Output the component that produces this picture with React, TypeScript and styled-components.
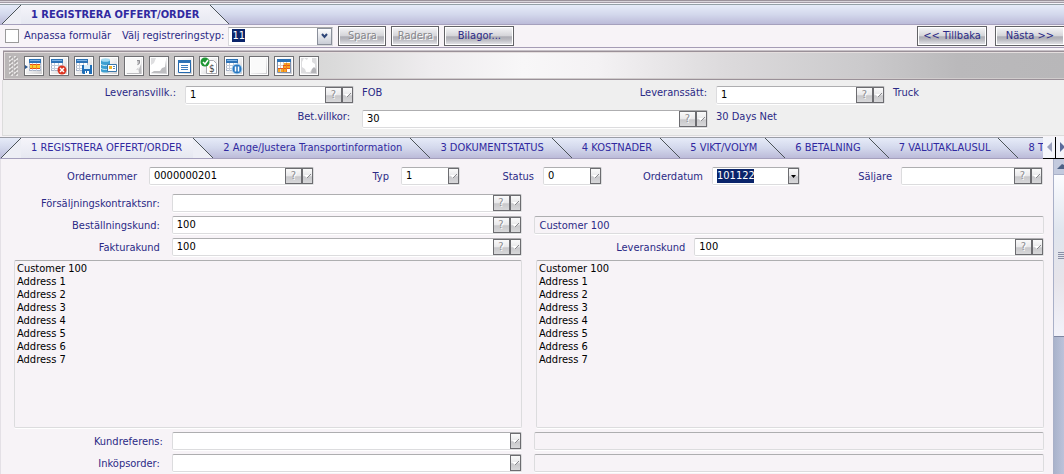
import React from "react";
import styled, { createGlobalStyle, css } from "styled-components";

const font = '"DejaVu Sans Condensed", "DejaVu Sans", sans-serif';
const ink = "#2b2a86";

const Global = createGlobalStyle`
  * { box-sizing: border-box; }
  body { margin: 0; background: #f7f3f7; font: 11px/14px ${font}; color: ${ink}; overflow: hidden; }
  button, input, select, textarea { font: inherit; color: inherit; margin: 0; border-radius: 0; }
`;

const Page = styled.div`
  display: flex;
  flex-direction: column;
  min-height: 100vh;
`;

const TopEdge = styled.div`
  height: 5px;
  background: linear-gradient(#9a929a 0 1px, #d8d4da 1px 2px, #a39ca6 2px 3px, #f4f4fa 3px 4px, #94a0a6 4px 5px);
`;

const Strip = styled.nav`
  display: flex;
  height: 20px;
  padding-left: 1px;
  background: linear-gradient(#e6ebf8, #d3d8ec 50%, #bcbbd9);
  border-bottom: 1px solid #a5a0bd;
  overflow: hidden;
`;

const LowerStrip = styled(Strip)`
  flex: 1;
  min-width: 0;
  height: 22px;
  border-top: 1px solid #9a9da6;
`;

const TabButton = styled.button<{ $bold?: boolean }>`
  display: flex;
  flex: none;
  padding: 0;
  border: 0;
  background: none;
  white-space: nowrap;
  color: #3029a0;
  font-weight: ${(p) => (p.$bold ? 700 : 400)};
  svg { display: block; flex: none; }
`;

const TabText = styled.span<{ $active?: boolean }>`
  align-self: stretch;
  padding: 0 ${(p) => (p.$active ? 11 : 8)}px 0 10px;
  line-height: 20px;
  background: ${(p) => (p.$active ? "linear-gradient(#f5f4fa, #e6e8f1)" : "none")};
`;

const Commands = styled.div`
  display: flex;
  align-items: center;
  height: 23px;
  padding-left: 5px;
  border-bottom: 1px solid #a59cb5;
`;

const CheckLabel = styled.label`
  display: flex;
  align-items: center;
  gap: 5px;
  width: 117px;
  white-space: nowrap;
`;

const Check = styled.input`
  appearance: none;
  width: 14px;
  height: 14px;
  background: #fff;
  border: 1px solid #9a9a9a;
`;

const Combo = styled.div`
  position: relative;
  width: 105px;
  margin: 0 5px 0 4px;
`;

const highlight = css`
  color: #fff;
  background: #fff linear-gradient(#0a246a, #0a246a) no-repeat;
`;

const ComboSelect = styled.select`
  display: block;
  appearance: none;
  width: 100%;
  height: 19px;
  padding: 0 3px;
  border: 1px solid #d8d8dc;
  border-top-color: #a8a8a8;
  ${highlight}
  background-size: 13px 13px;
  background-position: 3px 1px;
  option { color: #000; }
`;

const ComboArrow = styled.span`
  position: absolute;
  right: 1px;
  top: 1px;
  display: grid;
  place-items: center;
  width: 15px;
  height: 17px;
  border: 1px solid #8a8f9a;
  background: linear-gradient(#fdfdfe, #c9cdd6);
  pointer-events: none;
`;

const Push = styled.button<{ $push?: boolean; $wide?: boolean }>`
  height: 20px;
  width: ${(p) => (p.$wide ? 70 : 48)}px;
  flex: none;
  padding: 0;
  margin-right: 5px;
  margin-left: ${(p) => (p.$push ? "auto" : "0")};
  border: 1px solid #626266;
  box-shadow: inset 0 0 0 1px #fff;
  background: linear-gradient(#f6f6f8, #d4d4d8 50%, #acacb4 54%, #bcbcc2 72%, #e8e8ec);
  white-space: nowrap;
  line-height: 16px;
  &:disabled { color: #88888c; text-shadow: 1px 1px 0 #fff; }
`;

const Next = styled(Push)`
  margin: 0 -1px 0 3px;
`;

const Tools = styled.div`
  display: flex;
  align-items: center;
  gap: 5px;
  height: 29px;
  margin: 3px 0 0 3px;
  padding-left: 5px;
  border: solid #9a9098;
  border-width: 1px 0 1px 1px;
  box-shadow: 0 -1px 0 #c6c0c6, inset 1px 1px 0 #e4dede, inset 0 -1px 0 #d0cccc;
  background: linear-gradient(90deg, #bab6b7, #c6c3c3 15%, #dadada 31%, #eeecee 40%, #f8f7f8 49%, #f4f2f4 56%, #dcdadc 68%, #cbcacc 81%, #bab9bb 90%, #b8b7b9);
`;

const ToolButton = styled.button`
  width: 20px;
  height: 20px;
  flex: none;
  padding: 0;
  border: 1px solid #6f6f72;
  background: linear-gradient(135deg, #fff, #f2f2f3 45%, #c9c9cc);
  box-shadow: inset 0 0 0 1px #fff;
  svg { display: block; }
`;

const Header = styled.section`
  display: flex;
  flex-direction: column;
  gap: 6px;
  height: 56px;
  margin-left: 2px;
  padding-top: 6px;
  background: #efefef;
  border-left: 1px solid #dcdcdc;
  border-bottom: 1px solid #dcdcdc;
`;

const HeadRow = styled.div<{ $cols: string }>`
  display: grid;
  grid-template-columns: ${(p) => p.$cols};
  height: 18px;
  align-items: start;
`;

const HeadPair = styled.div`
  display: flex;
  justify-content: space-between;
`;

const Label = styled.label<{ $gap?: number }>`
  text-align: right;
  padding-right: ${(p) => p.$gap ?? 12}px;
  white-space: nowrap;
`;

const Row = styled(HeadRow)`
  align-items: center;
  > ${Label} { padding-top: 2px; }
`;

const Note = styled.span`
  padding-left: 8px;
  white-space: nowrap;
`;

const sunken = css`
  border: 1px solid #dcdcde;
  border-top-color: #aeaeb0;
  border-radius: 2px;
  box-shadow: 0 1px 0 #fff;
`;

const Box = styled.div`
  display: flex;
  align-items: stretch;
  height: 18px;
  min-width: 0;
  background: #fff;
  ${sunken}
`;

const Text = styled.input`
  flex: 1;
  width: 0;
  min-width: 0;
  padding: 0 4px;
  border: 0;
  background: none;
  color: #000;
  outline: 0;
`;

const DateText = styled(Text)`
  ${highlight}
  background-size: 37px 14px;
  background-position: 4px 1px;
`;

const Small = styled.button<{ $wide?: boolean }>`
  display: grid;
  place-items: center;
  width: ${(p) => (p.$wide ? 17 : 11)}px;
  flex: none;
  padding: 0;
  border: 1px solid #6c6c70;
  background: linear-gradient(#fafafa, #e8e8ea 50%, #c8c8cb 55%, #d8d8da);
  color: #8c8c90;
  text-shadow: 1px 1px 0 #fff;
  line-height: 14px;
  svg { display: block; }
`;

const ReadOnly = styled.input`
  width: 100%;
  min-width: 0;
  height: 18px;
  padding: 0 4px;
  background: none;
  ${sunken}
`;

const Address = styled.textarea`
  display: block;
  width: 100%;
  height: 168px;
  padding: 1px 2px;
  resize: none;
  overflow: hidden;
  background: none;
  color: #000;
  line-height: 13px;
  ${sunken}
`;

const Addresses = styled.div`
  display: grid;
  grid-template-columns: 508fr 508fr;
  gap: 14px;
  padding: 0 9px 0 13px;
`;

const Body = styled.div`
  display: flex;
  flex: 1;
`;

const Form = styled.form`
  display: flex;
  flex-direction: column;
  gap: 4px;
  flex: 1;
  min-width: 0;
  padding-top: 8px;
  border-left: 1px solid #e4e0e6;
`;

const FirstRow = styled(Row)`
  margin-bottom: 5px;
`;

const Scroll = styled.div`
  display: flex;
  flex-direction: column;
  width: 11px;
  border-left: 1px solid #a9b0c8;
  background: linear-gradient(90deg, #a9b3cb, #bcc2da);
`;

const ScrollUp = styled.button`
  height: 16px;
  padding: 0;
  border: 0;
  border-bottom: 1px solid #a9b0c8;
  background: #c3cade;
  svg { display: block; }
`;

const Thumb = styled.div`
  display: grid;
  place-items: center end;
  height: 162px;
  border-bottom: 1px solid #7e86a2;
  background: linear-gradient(#fbfcff, #dfe5ee 35%, #e6e4ea 65%, #f2f2fa);
`;

const StripRow = styled.div`
  display: flex;
  margin-top: 1px;
`;

const TabPager = styled.div`
  display: flex;
  flex: none;
  width: 21px;
  border-bottom: 1px solid #000;
  background: #fff;
`;

const PagerButton = styled.button`
  width: 12px;
  padding: 0;
  border: 0;
  background: #f4f5fa;
  & + & { width: 9px; border-left: 1px solid #000; }
  svg { display: block; }
`;

function Slant({ active, left }: { active?: boolean; left?: boolean }) {
  return (
    <svg width="20" height="20" viewBox="0 0 20 20" aria-hidden="true">
      {active && <path d={left ? "M0 20 20 0V20Z" : "M0 0 20 20H0Z"} fill="#edeef5" />}
      <path d={left ? "M0 20 20 0" : "M0 0 20 20"} stroke="#4b5357" fill="none" />
    </svg>
  );
}

function Tab({ text, active, bold }: { text: string; active?: boolean; bold?: boolean }) {
  return (
    <TabButton type="button" $bold={bold}>
      {active && <Slant active left />}
      <TabText $active={active}>{text}</TabText>
      <Slant active={active} />
    </TabButton>
  );
}

const Chevron = () => (
  <svg width="9" height="10" viewBox="0 0 9 10" aria-hidden="true">
    <path d="M1 4h5L4 7z" fill="#fff" />
    <path d="M4 7 8 3" stroke="#8a8a8e" fill="none" />
  </svg>
);

function Field({ id, name, value = "", lookup }: { id: string; name: string; value?: string; lookup?: boolean }) {
  return (
    <Box>
      <Text id={id} defaultValue={value} />
      {lookup && <Small type="button" $wide aria-label={`Sök ${name}`}>?</Small>}
      <Small type="button" aria-label={`Meny ${name}`}><Chevron /></Small>
    </Box>
  );
}

const Table = ({ x = 2 }: { x?: number }) => (
  <g>
    <rect x={x + 0.5} y="2.5" width="11" height="11" fill="#fff" stroke="#a9b4c8" />
    <path d={`M${x} 8.500h12M${x} 11.500h12M${x + 3}.5 6v8M${x + 7}.5 6v8`} stroke="#c3ccda" />
    <rect x={x} y="2" width="12" height="4" fill="#2c72b6" />
    <path d={`M${x + 1} 3.500h10`} stroke="#7fb4e6" />
  </g>
);

const icons: [string, React.ReactNode][] = [
  ["Visa rad", <><Table x={4} /><path d="M5 7h10v5H5z" fill="#fbd02c" /><path d="M5 7.500h10M5 11.500h10" stroke="#e24a1c" /><path d="M7.500 7v5M11.500 7v5" stroke="#ef8a22" /><path d="M0 8l3 2-3 2z" fill="#26558e" /></>],
  ["Ta bort", <><Table x={1} /><circle cx="12" cy="13" r="4.500" fill="#dc3420" /><path d="M10 11l4 4M14 11l-4 4" stroke="#fff" strokeWidth="1.500" /></>],
  ["Spara tabell", <><Table x={1} /><path d="M7 8h10v9H8l-1-1z" fill="#1f6eb8" /><path d="M9 8h6v4H9z" fill="#d8ecfa" /><path d="M10 14h4v3h-4z" fill="#fff" /><path d="M11 14h1v2h-1z" fill="#1f6eb8" /></>],
  ["Databas", <><path d="M1 3v11c0 2 9 2 9 0V3z" fill="#3da0d2" /><ellipse cx="5.500" cy="3" rx="4.500" ry="1.800" fill="#a6dcf2" /><path d="M1 7c1 2 8 2 9 0M1 11c1 2 8 2 9 0" stroke="#c9edfa" fill="none" /><path d="M7.500 7.500h9v7h-9z" fill="#fff" stroke="#3a76a8" /><path d="M9 9h3v3H9z" fill="#f2b52c" /><path d="M13 9.500h2M13 11.500h2" stroke="#5a86b4" /></>],
  ["Dokument", <><path d="M1 1h15v15H1z" fill="#f8f8f8" /><path d="M12 3h3v3l-2 2v3l-2 2 3-1 2-5v10H2v-1h12" fill="#bcbcbf" /><path d="M12 3.500h2.500V6l-2 2" stroke="#8e8e92" fill="none" /></>],
  ["Bild", <><path d="M1 1h15v15H1z" fill="#fff" /><path d="M1 8l3-2 2-5H1z" fill="#dedee0" /><path d="M1 16l3-2h6l2-3 3-1 1-7v13z" fill="#bdbdc0" /></>],
  ["Lista", <><path d="M3.500 3.500h12v12h-12z" fill="#fff" stroke="#2368ae" /><path d="M3 3h13v3H3z" fill="#2c72b6" /><path d="M6 8.500h7M6 10.500h7M6 12.500h7" stroke="#3d7dbe" /></>],
  ["Godkänn pris", <><path d="M6.500 3.500h7l3 3v10h-10z" fill="#fff" stroke="#aaaab0" /><text x="9" y="15" fontSize="10" fill="#444">$</text><circle cx="5" cy="5" r="4.500" fill="#1e9634" /><path d="M3 5l2 2 3-4" stroke="#fff" strokeWidth="1.500" fill="none" /></>],
  ["Pausa", <><Table x={1} /><circle cx="12" cy="12" r="5" fill="#2877c0" stroke="#b4d8f4" /><path d="M10.500 9.500v5M13.500 9.500v5" stroke="#fff" strokeWidth="1.500" /></>],
  ["Tom", <path d="M1 1h15v15H1z" fill="#fafafa" />],
  ["Kalender", <><path d="M2.500 2.500h13v13h-13z" fill="#fff" stroke="#7f91ae" /><path d="M8 6h7v6h-3v3H3v-4h5z" fill="#f9a824" /><path d="M3 8.500h12M3 11.500h12M5.500 5v10M8.500 5v10M11.500 5v10" stroke="#d8cfc4" /><path d="M8 8.500h7M3 11.500h12" stroke="#e0561f" /><path d="M11.500 6v9M8.500 9v6" stroke="#ea7c20" /><path d="M2 2h14v3H2z" fill="#2c72b6" /></>],
  ["Koppling", <><path d="M1 1h15v15H1z" fill="#dcdcde" /><path d="M4 1l3 2 1-2h4v4l3 2v4l-3 1-2 3H6l-1-3-3-2V5z" fill="#fff" /><path d="M12 12l2-2 2 2v4h-5z" fill="#b4b4b8" /></>],
];

const address = ["Customer 100", "Address 1", "Address 2", "Address 3", "Address 4", "Address 5", "Address 6", "Address 7"].join("\n");

const tabs = [
  "2 Ange/Justera Transportinformation",
  "3 DOKUMENTSTATUS",
  "4 KOSTNADER",
  "5 VIKT/VOLYM",
  "6 BETALNING",
  "7 VALUTAKLAUSUL",
  "8 T",
];

const pairCols = "171fr 350fr 13fr 510fr 9fr";

export default function App() {
  return (
    <Page>
      <Global />
      <TopEdge />
      <Strip aria-label="Formulär"><Tab text="1 REGISTRERA OFFERT/ORDER" active bold /></Strip>
      <Commands>
        <CheckLabel><Check type="checkbox" />Anpassa formulär</CheckLabel>
        <label htmlFor="regtype">Välj registreringstyp:</label>
        <Combo>
          <ComboSelect id="regtype" defaultValue="11"><option>11</option></ComboSelect>
          <ComboArrow aria-hidden="true">
            <svg width="7" height="6" viewBox="0 0 7 6"><path d="M1 1 3.500 4 6 1" stroke="#2f4678" strokeWidth="2" fill="none" /></svg>
          </ComboArrow>
        </Combo>
        <Push type="button" disabled>Spara</Push>
        <Push type="button" disabled>Radera</Push>
        <Push type="button" $wide>Bilagor...</Push>
        <Push type="button" $wide $push>&lt;&lt; Tillbaka</Push>
        <Next type="button" $wide>Nästa &gt;&gt;</Next>
      </Commands>
      <Tools role="toolbar" aria-label="Verktyg">
        <svg width="10" height="20" viewBox="0 0 10 20" aria-hidden="true">
          {[1, 5, 9, 13, 17].map((y) => (
            <path key={y} d={`M0 ${y}h2M5 ${y}h2M2 ${y + 2}h2M7 ${y + 2}h2`} stroke="#e6e4e4" strokeWidth="2" />
          ))}
          {[2, 6, 10, 14, 18].map((y) => (
            <path key={y} d={`M1 ${y}h2M6 ${y}h2`} stroke="#8f8c8c" />
          ))}
        </svg>
        {icons.map(([name, art]) => (
          <ToolButton key={name} type="button" aria-label={name}>
            <svg width="18" height="18" viewBox="0 0 18 18" aria-hidden="true">{art}</svg>
          </ToolButton>
        ))}
      </Tools>
      <Header>
        <HeadRow $cols="182fr 169fr 362fr 169fr 179fr">
          <Label $gap={9} htmlFor="villk">Leveransvillk.:</Label>
          <Field id="villk" name="leveransvillkor" value="1" lookup />
          <HeadPair><Note>FOB</Note><Label $gap={9} htmlFor="satt">Leveranssätt:</Label></HeadPair>
          <Field id="satt" name="leveranssätt" value="1" lookup />
          <Note>Truck</Note>
        </HeadRow>
        <HeadRow $cols="359fr 346fr 356fr">
          <Label htmlFor="bet">Bet.villkor:</Label>
          <Field id="bet" name="betalningsvillkor" value="30" lookup />
          <Note>30 Days Net</Note>
        </HeadRow>
      </Header>
      <StripRow>
        <LowerStrip aria-label="Delar">
          <Tab text="1 REGISTRERA OFFERT/ORDER" active />
          {tabs.map((t) => <Tab key={t} text={t} />)}
        </LowerStrip>
        <TabPager>
          <PagerButton type="button" aria-label="Föregående flik">
            <svg width="12" height="21" viewBox="0 0 12 21"><path d="M9 5v10L4 10z" fill="#9aa0bc" /></svg>
          </PagerButton>
          <PagerButton type="button" aria-label="Nästa flik">
            <svg width="8" height="21" viewBox="0 0 8 21"><path d="M4 5v10l5-5z" fill="#5b6c9c" /></svg>
          </PagerButton>
        </TabPager>
      </StripRow>
      <Body>
        <Form>
          <FirstRow $cols="148fr 165fr 87fr 59fr 83fr 59fr 110fr 88fr 101fr 142fr 10fr">
            <Label htmlFor="ordnr">Ordernummer</Label>
            <Field id="ordnr" name="ordernummer" value="0000000201" lookup />
            <Label htmlFor="typ">Typ</Label>
            <Field id="typ" name="typ" value="1" />
            <Label $gap={9} htmlFor="status">Status</Label>
            <Field id="status" name="status" value="0" />
            <Label $gap={9} htmlFor="datum">Orderdatum</Label>
            <Box>
              <DateText id="datum" defaultValue="101122" />
              <Small type="button" aria-label="Välj datum">
                <svg width="5" height="3" viewBox="0 0 5 3"><path d="M0 0h5L2.500 3z" fill="#000" /></svg>
              </Small>
            </Box>
            <Label $gap={9} htmlFor="saljare">Säljare</Label>
            <Field id="saljare" name="säljare" lookup />
          </FirstRow>
          <Row $cols={pairCols}>
            <Label htmlFor="kontrakt">Försäljningskontraktsnr:</Label>
            <Field id="kontrakt" name="kontraktsnummer" lookup />
          </Row>
          <Row $cols={pairCols}>
            <Label htmlFor="kund">Beställningskund:</Label>
            <Field id="kund" name="beställningskund" value="100" lookup />
            <span />
            <ReadOnly readOnly aria-label="Kundnamn" value="Customer 100" />
          </Row>
          <Row $cols="171fr 350fr 173fr 350fr 9fr">
            <Label htmlFor="faktura">Fakturakund</Label>
            <Field id="faktura" name="fakturakund" value="100" lookup />
            <Label $gap={9} htmlFor="leverans">Leveranskund</Label>
            <Field id="leverans" name="leveranskund" value="100" lookup />
          </Row>
          <Addresses>
            <Address readOnly aria-label="Fakturaadress" value={address} />
            <Address readOnly aria-label="Leveransadress" value={address} />
          </Addresses>
          <Row $cols={pairCols}>
            <Label $gap={9} htmlFor="ref">Kundreferens:</Label>
            <Field id="ref" name="kundreferens" />
            <span />
            <ReadOnly readOnly aria-label="Kundreferens text" />
          </Row>
          <Row $cols={pairCols}>
            <Label htmlFor="inkop">Inköpsorder:</Label>
            <Field id="inkop" name="inköpsorder" />
            <span />
            <ReadOnly readOnly aria-label="Inköpsorder text" />
          </Row>
        </Form>
        <Scroll>
          <ScrollUp type="button" aria-label="Rulla upp">
            <svg width="10" height="15" viewBox="0 0 10 15"><path d="M3 10h7V6L8 5z" fill="#4d6185" /></svg>
          </ScrollUp>
          <Thumb>
            <svg width="6" height="8" viewBox="0 0 6 8" aria-hidden="true"><path d="M0 .5h6M0 2.500h6M0 4.500h6M0 6.500h6" stroke="#8a8fa6" /></svg>
          </Thumb>
        </Scroll>
      </Body>
    </Page>
  );
}
